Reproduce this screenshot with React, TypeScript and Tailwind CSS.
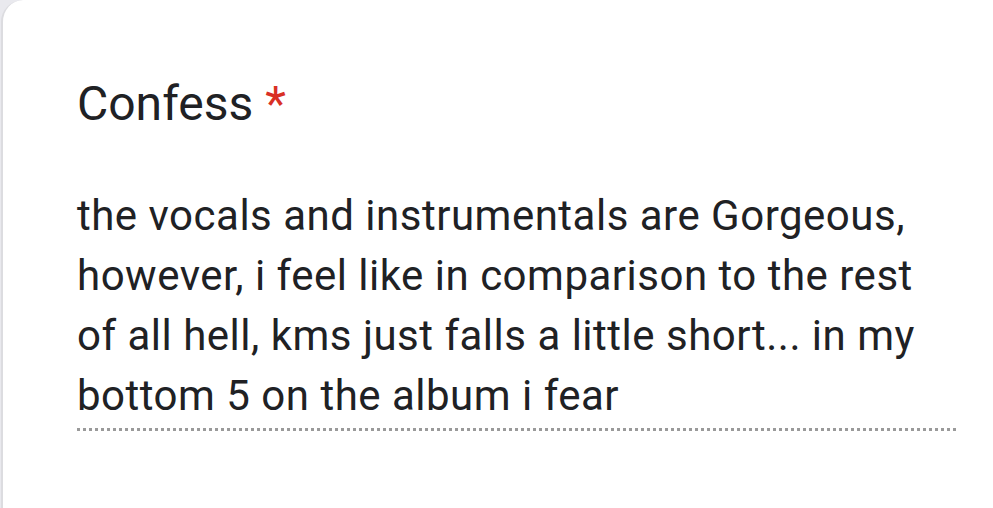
export default function App() {
  return (
    <div className="min-h-screen bg-[#e9e9ee] pl-px" style={{ fontFamily: "Roboto, 'Noto Sans', sans-serif" }}>
      <div className="min-h-[508px] bg-white border-l-[2px] border-[#dcdce0] rounded-tl-[22px] pl-[74px] pr-9 pt-[74px]">
        <div className="text-[48px] leading-[60px] text-[#202124]">
          Confess <span className="text-[#d93025]">*</span>
        </div>
        <div className="mt-[52px] text-[42px] leading-[60px] tracking-[0.5px] text-[#202124]">
          the vocals and instrumentals are Gorgeous, however, i feel like in comparison to the rest of all hell, kms just
          falls a little short... in my bottom 5 on the album i fear
        </div>
        <div className="mt-[2px] h-[3px] bg-[repeating-linear-gradient(90deg,#9a9a9a_0_3px,transparent_3px_6px)]" />
      </div>
    </div>
  );
}
